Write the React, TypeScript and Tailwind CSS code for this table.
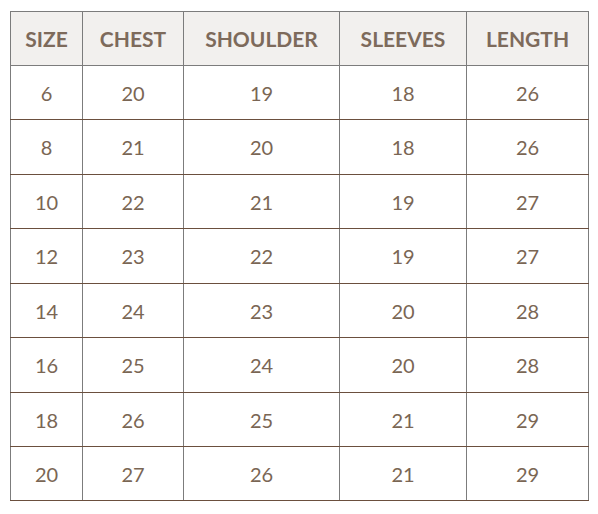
const headers = ['SIZE', 'CHEST', 'SHOULDER', 'SLEEVES', 'LENGTH'];

const rows = [
  [6, 20, 19, 18, 26],
  [8, 21, 20, 18, 26],
  [10, 22, 21, 19, 27],
  [12, 23, 22, 19, 27],
  [14, 24, 23, 20, 28],
  [16, 25, 24, 20, 28],
  [18, 26, 25, 21, 29],
  [20, 27, 26, 21, 29],
];

const widths = ['w-[72px]', 'w-[101px]', 'w-[156px]', 'w-[127px]', 'w-[122px]'];

// row heights alternate a little so the lines land where the reference has them
const rowHeights = ['h-[54px]', 'h-[55px]', 'h-[54px]', 'h-[55px]', 'h-[54px]', 'h-[55px]', 'h-[54px]', 'h-[54px]'];

export default function App() {
  return (
    <div className="w-[598px] h-[514px] bg-white pt-[11px] pl-[10px] font-['Lato',sans-serif]">
      <table className="w-[579px] table-fixed border-collapse text-center border border-[#7c7c7c] border-b-[#6b4f3e]">
        <colgroup>
          {widths.map((w) => (
            <col key={w} className={w} />
          ))}
        </colgroup>
        <thead>
          <tr className="h-[54px] bg-[#f2f0ee]">
            {headers.map((h) => (
              <th
                key={h}
                className="border-x border-b border-[#7c7c7c] text-[21px] font-bold text-[#7d6a5b] p-0"
              >
                {h}
              </th>
            ))}
          </tr>
        </thead>
        <tbody>
          {rows.map((r, i) => (
            <tr key={i} className={rowHeights[i]}>
              {r.map((v, j) => (
                <td
                  key={j}
                  className="border-x border-[#7c7c7c] border-b border-b-[#6b4f3e] text-[20px] text-[#7a6654] p-0"
                >
                  {v}
                </td>
              ))}
            </tr>
          ))}
        </tbody>
      </table>
    </div>
  );
}
